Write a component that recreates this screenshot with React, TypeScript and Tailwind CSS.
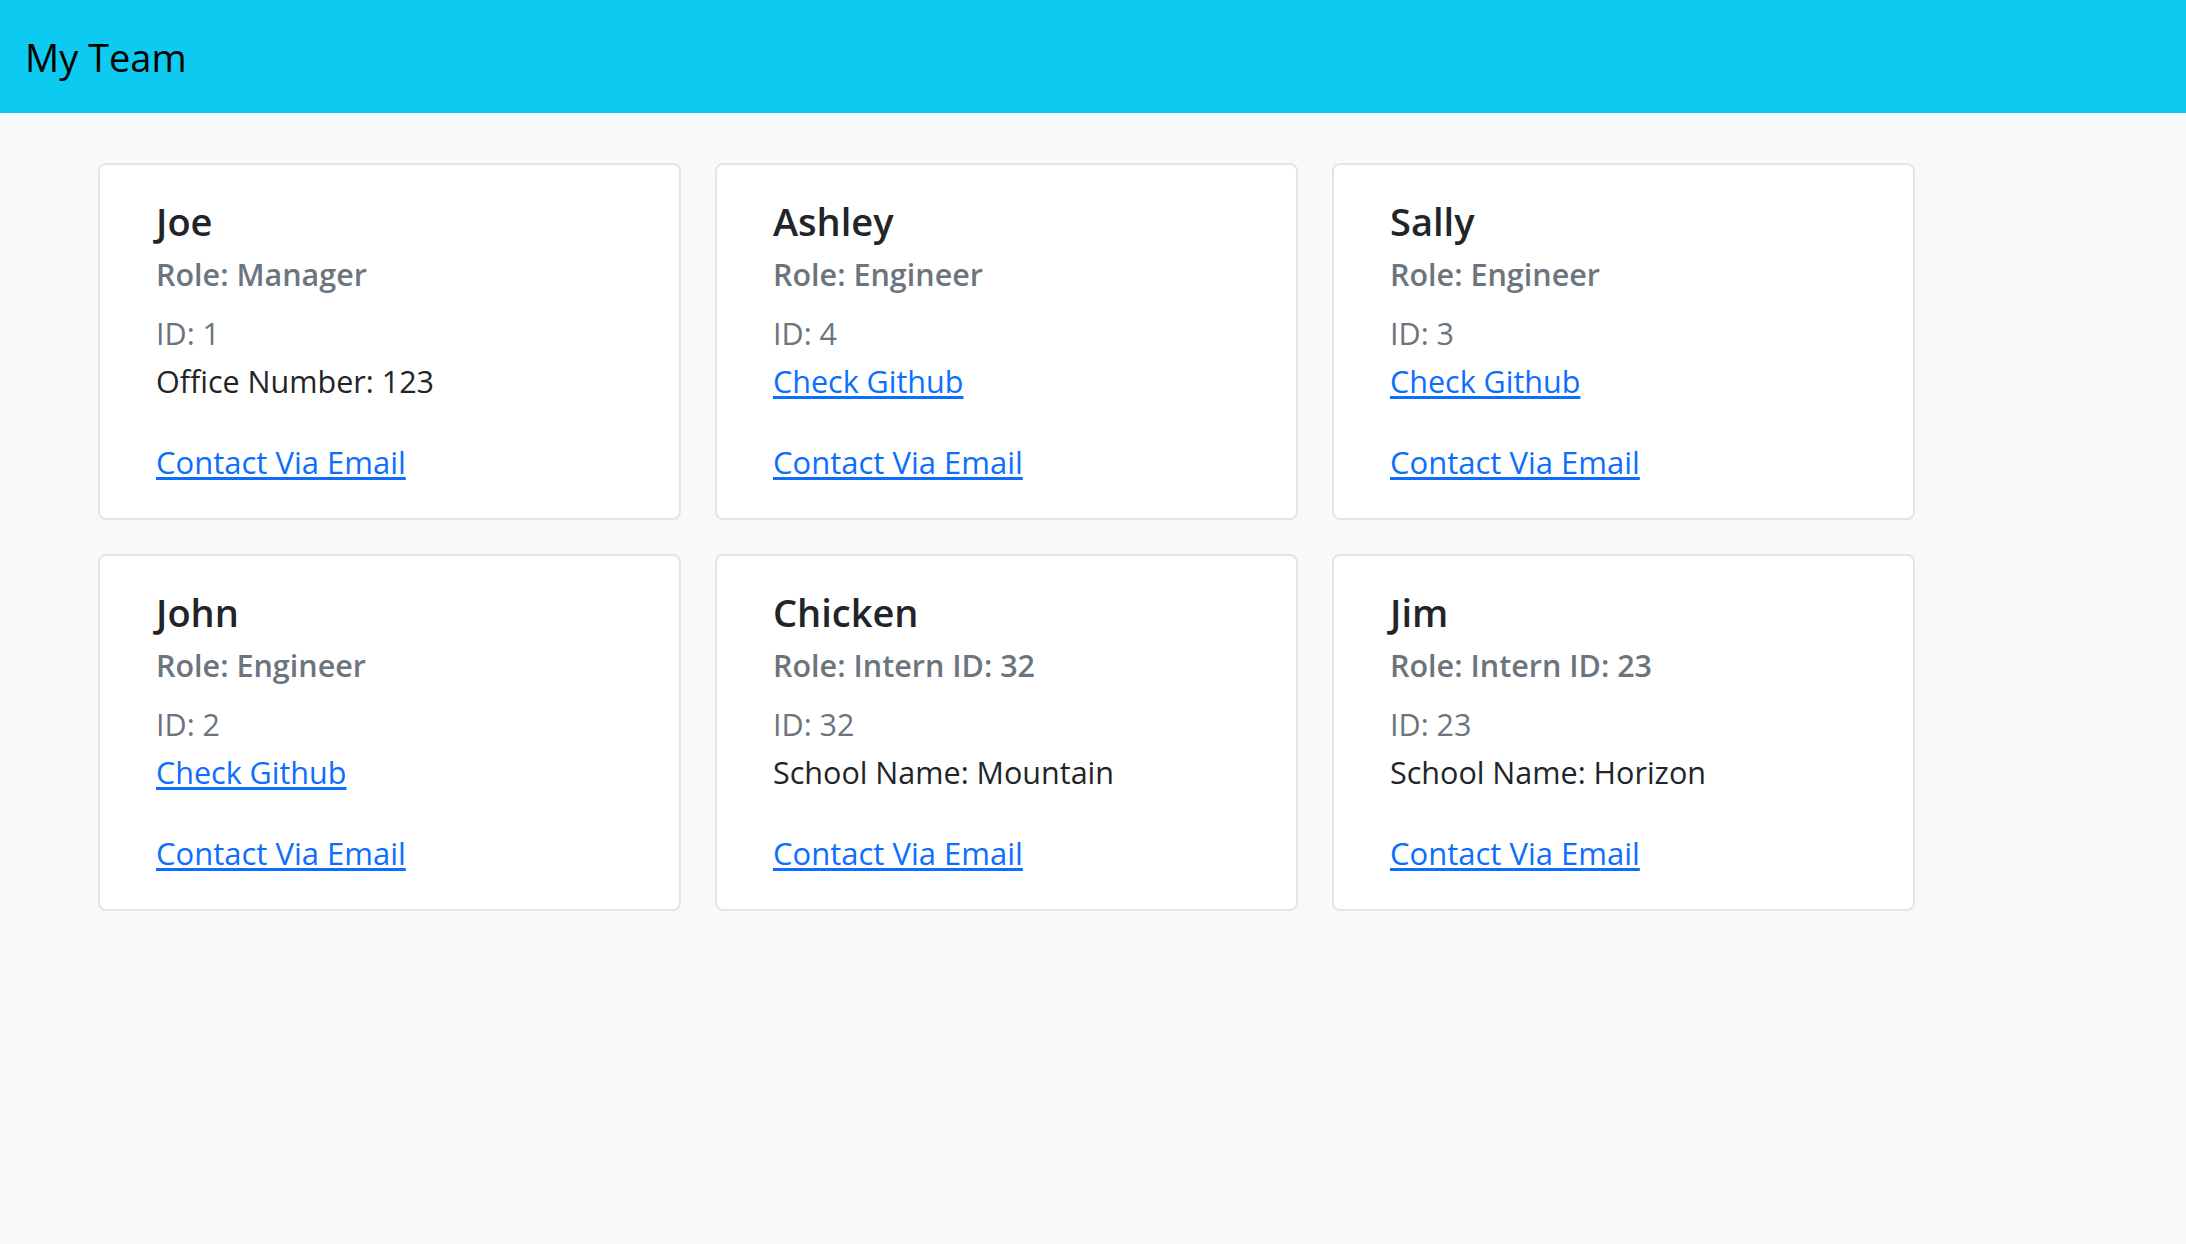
import React from 'react';

interface Member {
  name: string;
  role: string;
  id: number;
  extra: { kind: 'office' | 'github' | 'school'; value: string };
}

const team: Member[] = [
  { name: 'Joe', role: 'Role: Manager', id: 1, extra: { kind: 'office', value: '123' } },
  { name: 'Ashley', role: 'Role: Engineer', id: 4, extra: { kind: 'github', value: 'ashley' } },
  { name: 'Sally', role: 'Role: Engineer', id: 3, extra: { kind: 'github', value: 'sally' } },
  { name: 'John', role: 'Role: Engineer', id: 2, extra: { kind: 'github', value: 'john' } },
  { name: 'Chicken', role: 'Role: Intern ID: 32', id: 32, extra: { kind: 'school', value: 'Mountain' } },
  { name: 'Jim', role: 'Role: Intern ID: 23', id: 23, extra: { kind: 'school', value: 'Horizon' } },
];

function MemberCard({ member }: { member: Member }) {
  const { extra } = member;

  return (
    <div className="bg-white border-2 border-[#e4e5e7] rounded-[8px] pl-[56px] pr-6 pt-[32px] pb-[38px]">
      <h5 className="text-[38px] leading-[48px] font-semibold text-[#212529]">{member.name}</h5>
      <h6 className="mt-[11px] text-[30.5px] leading-[36px] font-semibold text-[#6c757d]">{member.role}</h6>
      <p className="mt-[23px] text-[30.5px] leading-[36px] text-[#6c757d]">ID: {member.id}</p>
      <p className="mt-[12px] text-[30.5px] leading-[36px] text-[#212529]">
        {extra.kind === 'office' && <>Office Number: {extra.value}</>}
        {extra.kind === 'school' && <>School Name: {extra.value}</>}
        {extra.kind === 'github' && (
          <a href="#" className="text-[#0d6efd] underline underline-offset-[3px]">
            Check Github
          </a>
        )}
      </p>
      <p className="mt-[45px] text-[31px] leading-[36px]">
        <a href="#" className="text-[#0d6efd] underline underline-offset-[3px]">
          Contact Via Email
        </a>
      </p>
    </div>
  );
}

export default function App() {
  return (
    <div className="min-h-screen bg-[#f8f9fa] font-['Open_Sans',sans-serif]">
      <header className="h-[113px] bg-[#0dcaf0] flex items-center pl-[25px] pt-[2px]">
        <h1 className="text-[38px] text-black">My Team</h1>
      </header>
      <main className="pl-[98px] pt-[50px]">
        <div className="grid grid-cols-[repeat(3,583px)] gap-x-[34px] gap-y-[34px]">
          {team.map((m) => (
            <MemberCard key={m.name} member={m} />
          ))}
        </div>
      </main>
    </div>
  );
}
